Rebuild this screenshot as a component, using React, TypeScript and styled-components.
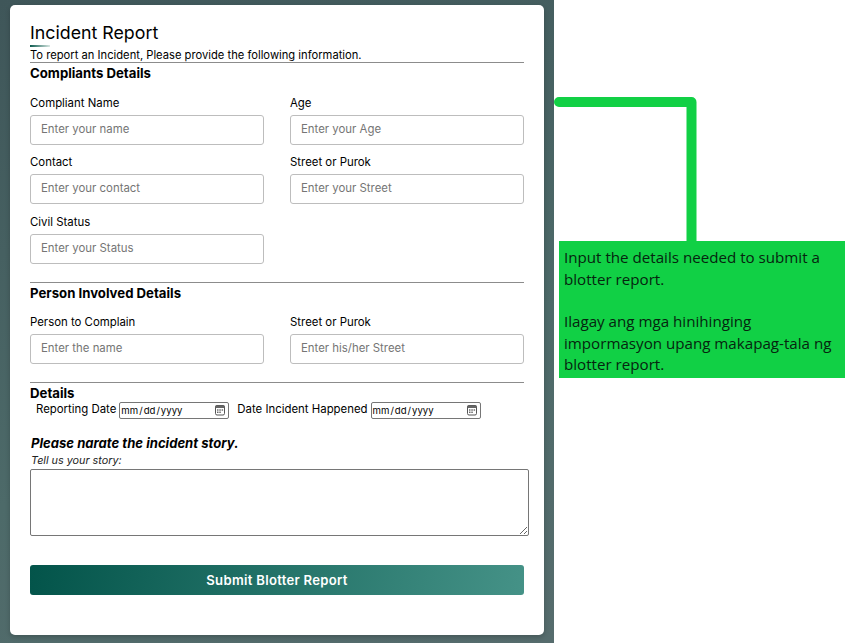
import React from 'react';
import styled, { createGlobalStyle } from 'styled-components';

const GlobalStyle = createGlobalStyle`
    html, body {
        margin: 0;
        padding: 0;
        background: #fff;
    }
`

const calendarIcon = `url("data:image/svg+xml,${encodeURIComponent(
    '<svg xmlns="http://www.w3.org/2000/svg" width="12" height="12" viewBox="0 0 12 12"><rect x="1.5" y="1.5" width="9" height="9.5" rx="1.5" fill="none" stroke="#555" stroke-width="1"/><rect x="1.5" y="1.5" width="9" height="2.5" fill="#666"/><path d="M3 6h1.5M5.3 6h1.5M7.6 6h1.5M3 8.2h1.5M5.3 8.2h1.5" stroke="#222" stroke-width="1"/></svg>'
)}")`

const Page = styled.div`
    position: relative;
    width: 863px;
    height: 643px;
    overflow: hidden;
    background: #fff;
`

const Backdrop = styled.div`
    width: 554px;
    height: 643px;
    box-sizing: border-box;
    padding: 5px 10px 8px;
    background: linear-gradient(160deg, #3f5659 0%, #4d6a69 60%, #566c6d 100%);
`

const Card = styled.form`
    box-sizing: border-box;
    height: 630px;
    padding: 17px 20px 0;
    background: #fff;
    border-radius: 5px;
    box-shadow: 0 2px 5px rgba(0, 0, 0, 0.2);
    font-family: Inter, "Liberation Sans", sans-serif;
    color: #000;
`

const Title = styled.h1`
    margin: 0;
    font-size: 17.8px;
    line-height: 22px;
    font-weight: 400;
`

const TitleBar = styled.div`
    width: 20px;
    height: 2px;
    margin-top: 1px;
    background: linear-gradient(90deg, #0c5a4e, #d8e6e2);
`

const Intro = styled.p`
    margin: 1px 0 0;
    font-size: 11.2px;
    line-height: 14px;
`

const Section = styled.section<{ $top?: number }>`
    margin-top: ${p => p.$top ?? 0}px;
    border-top: 1px solid #8c8c8c;
`

const Heading = styled.h2`
    margin: 2px 0 0;
    font-size: 13.2px;
    line-height: 16px;
    font-weight: 700;
`

const Fields = styled.div<{ $top: number }>`
    display: grid;
    grid-template-columns: 234px 234px;
    column-gap: 26px;
    row-gap: 10.5px;
    margin-top: ${p => p.$top}px;
`

const Field = styled.label`
    display: flex;
    flex-direction: column;
    gap: 5px;
    font-size: 11.4px;
    line-height: 14px;
`

const TextInput = styled.input`
    box-sizing: border-box;
    width: 234px;
    height: 30px;
    padding: 0 10px 2px;
    border: 1px solid #bdbdbd;
    border-radius: 3px;
    font: inherit;
    &::placeholder {
        color: #757575;
        opacity: 1;
    }
`

const DateRow = styled.div`
    display: flex;
    align-items: flex-start;
    margin: 1px 0 0 6px;
    height: 18px;
    font-size: 11.4px;
    line-height: 14px;
`

const DateLabel = styled.label<{ $gap: number }>`
    display: flex;
    align-items: flex-start;
    gap: 3px;
    margin-right: ${p => p.$gap}px;
`

const DateInput = styled.input`
    box-sizing: border-box;
    width: 110px;
    height: 17px;
    padding: 0 1px 0 0;
    border: 1px solid #767676;
    border-radius: 2px;
    font-family: Inter, "Liberation Sans", sans-serif;
    font-size: 9.6px;
    &::-webkit-calendar-picker-indicator {
        margin: 0;
        padding: 0 1px;
        width: 12px;
        height: 12px;
        background-image: ${calendarIcon};
    }
`

const StoryTitle = styled.h3`
    margin: 15px 0 0 1px;
    font-size: 13.1px;
    line-height: 16px;
    font-weight: 700;
    font-style: italic;
`

const StoryHint = styled.p`
    margin: 3px 0 0 1px;
    font-size: 10.8px;
    line-height: 13px;
    font-style: italic;
    color: #222;
`

const StoryBox = styled.textarea`
    display: block;
    box-sizing: border-box;
    width: 499px;
    height: 67px;
    margin-top: 2px;
    border: 1px solid #767676;
    border-radius: 2px;
    outline: none;
`

const SubmitButton = styled.button`
    display: block;
    width: 494px;
    height: 30px;
    margin-top: 29px;
    border: 0;
    border-radius: 3px;
    background: linear-gradient(100deg, #03544a 0%, #459287 100%);
    color: #fff;
    font-family: Inter, "Liberation Sans", sans-serif;
    font-size: 13.1px;
    font-weight: 600;
    letter-spacing: 0.3px;
`

const ConnectorLine = styled.svg`
    position: absolute;
    left: 554px;
    top: 97px;
`

const Callout = styled.div`
    position: absolute;
    left: 559px;
    top: 241px;
    box-sizing: border-box;
    width: 286px;
    height: 137px;
    padding: 6px 5px 0;
    background: #11d045;
    color: #06240f;
    font-family: "Open Sans", "Noto Sans", sans-serif;
    font-size: 15.15px;
    line-height: 21.5px;
`

const CalloutGap = styled.div`
    height: 21px;
`

const App = () => {
    return (
        <Page>
            <GlobalStyle />
            <Backdrop>
                <Card onSubmit={e => e.preventDefault()}>
                    <Title>Incident Report</Title>
                    <TitleBar />
                    <Intro>To report an Incident, Please provide the following information.</Intro>

                    <Section>
                        <Heading>Compliants Details</Heading>
                        <Fields $top={14.75}>
                            <Field>Compliant Name<TextInput placeholder="Enter your name" /></Field>
                            <Field>Age<TextInput placeholder="Enter your Age" /></Field>
                            <Field>Contact<TextInput placeholder="Enter your contact" /></Field>
                            <Field>Street or Purok<TextInput placeholder="Enter your Street" /></Field>
                            <Field>Civil Status<TextInput placeholder="Enter your Status" /></Field>
                        </Fields>
                    </Section>

                    <Section $top={18}>
                        <Heading>Person Involved Details</Heading>
                        <Fields $top={14}>
                            <Field>Person to Complain<TextInput placeholder="Enter the name" /></Field>
                            <Field>Street or Purok<TextInput placeholder="Enter his/her Street" /></Field>
                        </Fields>
                    </Section>

                    <Section $top={18}>
                        <Heading>Details</Heading>
                        <DateRow>
                            <DateLabel $gap={8}>Reporting Date<DateInput type="date" /></DateLabel>
                            <DateLabel $gap={0}>Date Incident Happened<DateInput type="date" /></DateLabel>
                        </DateRow>
                    </Section>

                    <StoryTitle>Please narate the incident story.</StoryTitle>
                    <StoryHint>Tell us your story:</StoryHint>
                    <StoryBox />

                    <SubmitButton type="submit">Submit Blotter Report</SubmitButton>
                </Card>
            </Backdrop>

            <ConnectorLine width="146" height="146" viewBox="0 0 146 146">
                <path d="M5 5 H137.5 V146" fill="none" stroke="#11d045" strokeWidth="10" strokeLinecap="round" strokeLinejoin="round" />
            </ConnectorLine>
            <Callout>
                Input the details needed to submit a blotter report.
                <CalloutGap />
                Ilagay ang mga hinihinging impormasyon upang makapag-tala ng blotter report.
            </Callout>
        </Page>
    )
}

export default App
